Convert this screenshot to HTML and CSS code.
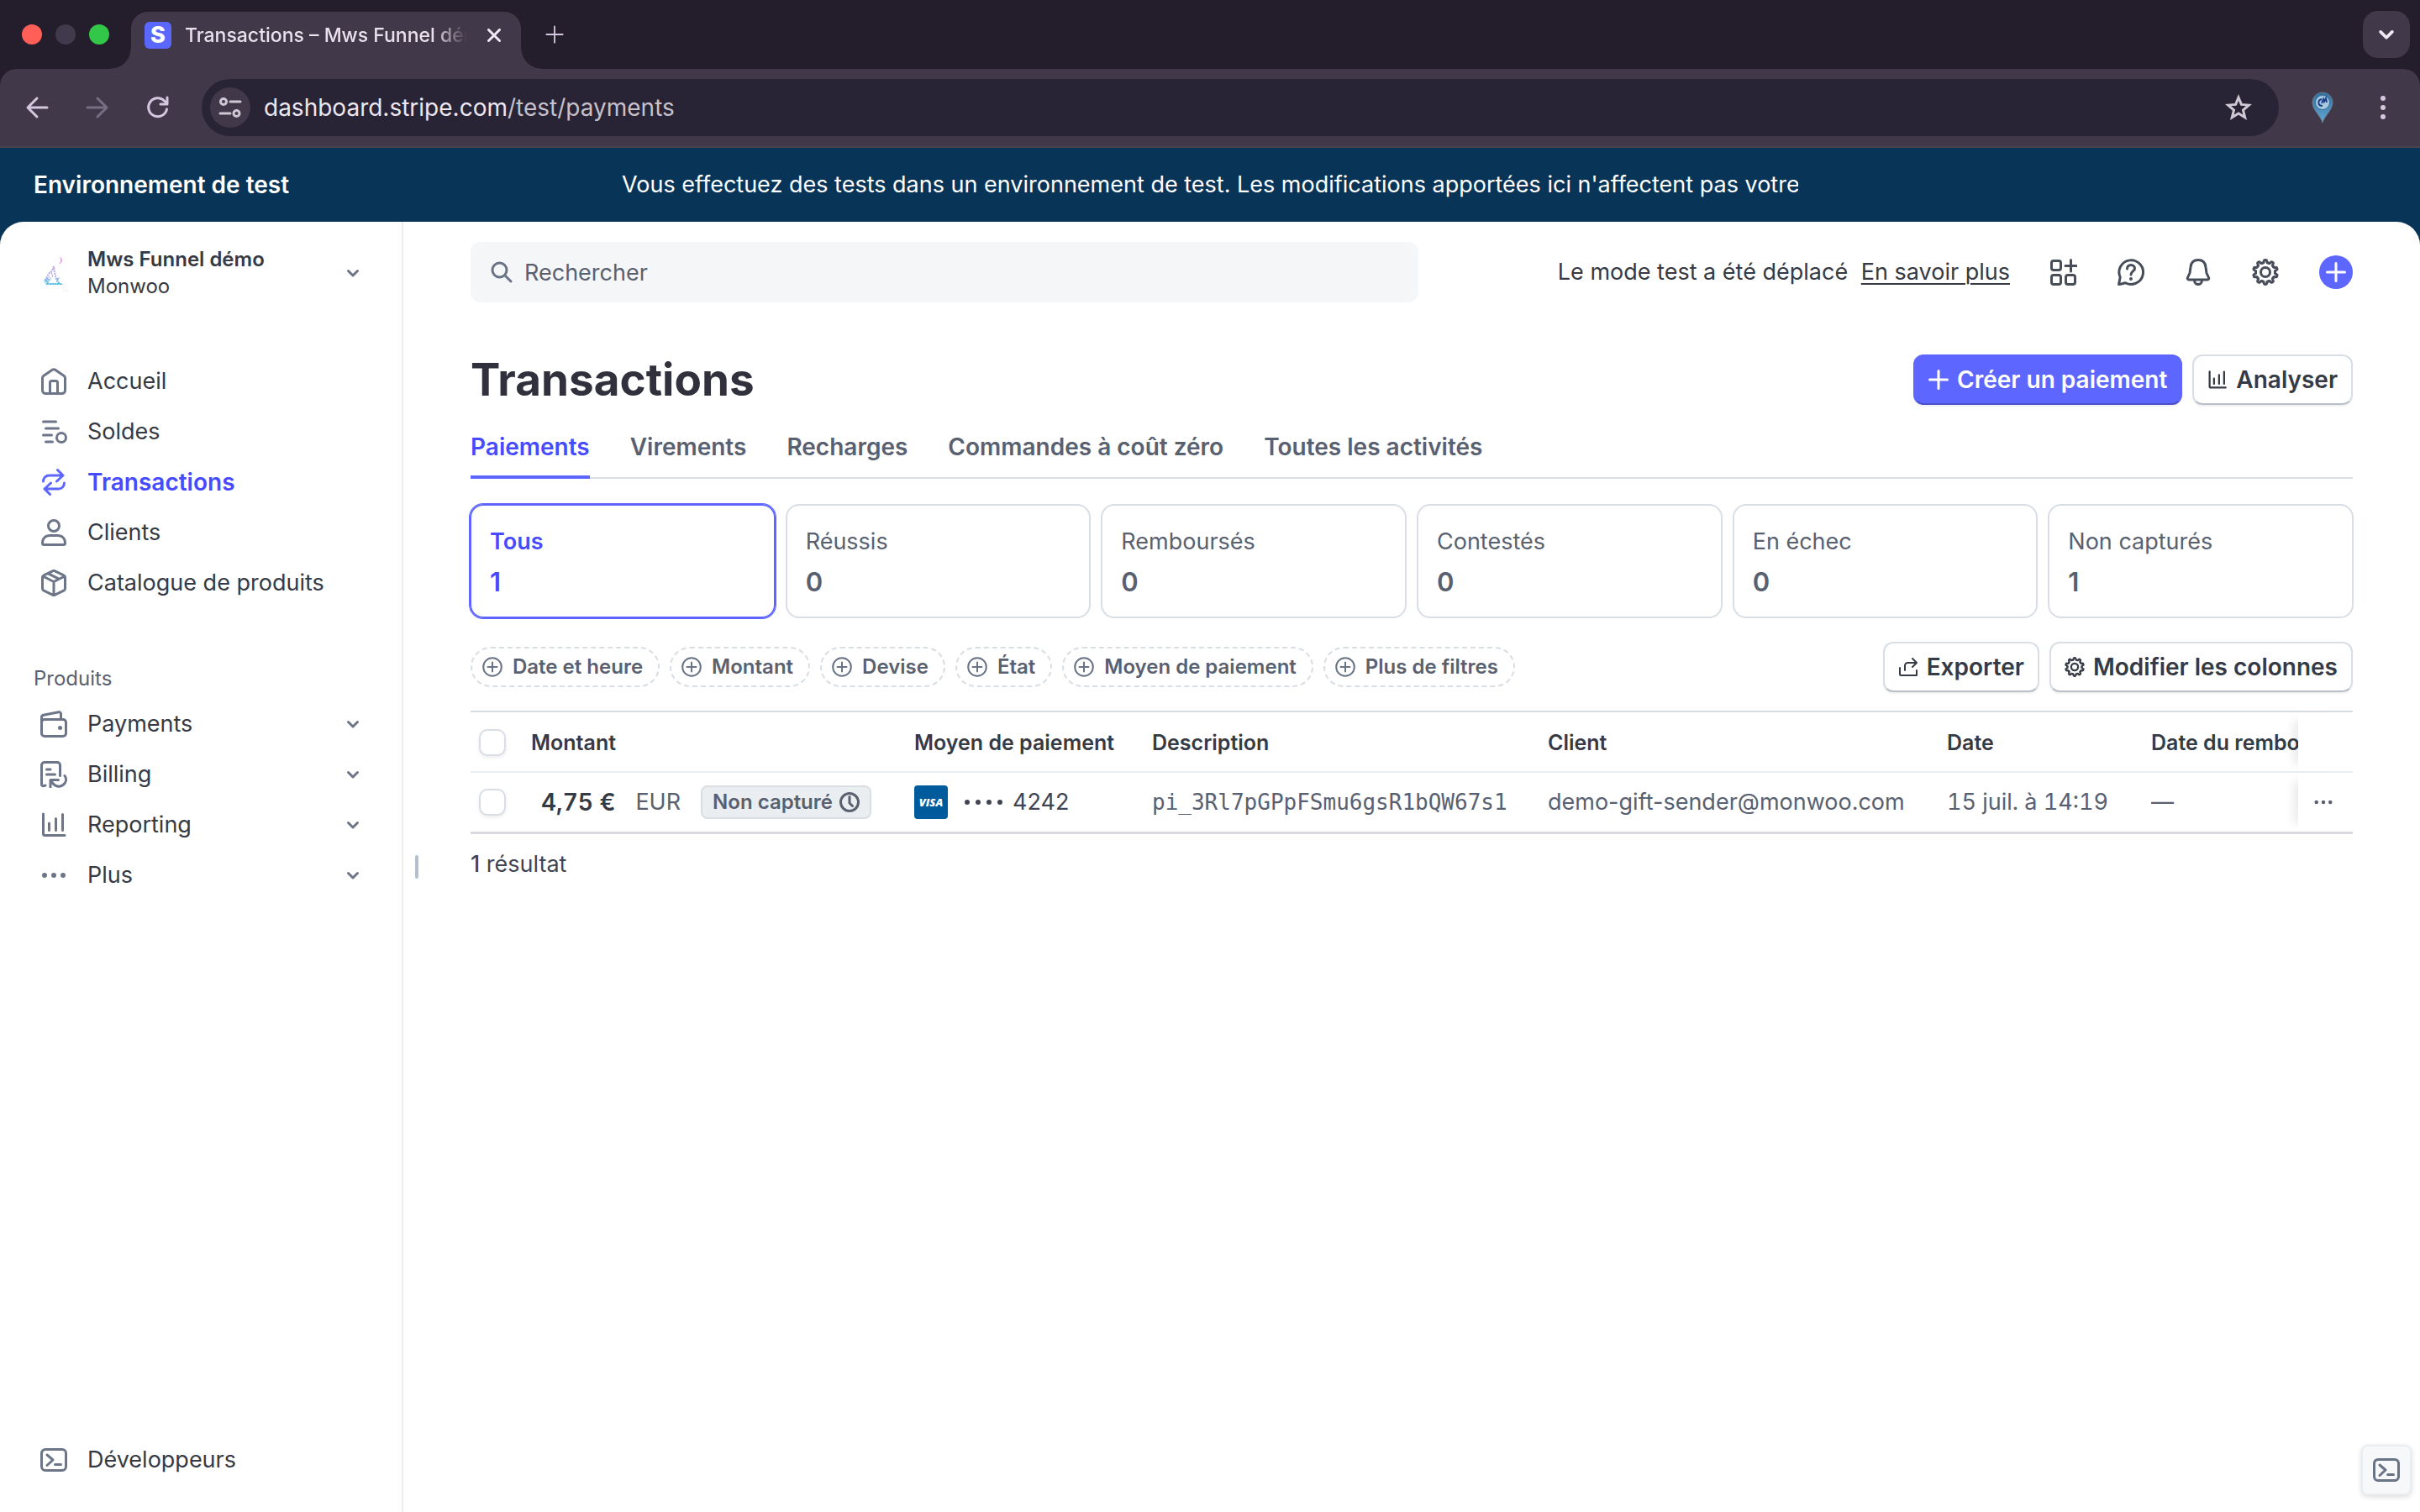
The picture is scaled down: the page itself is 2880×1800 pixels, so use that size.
FILE: index.html
```html
<!DOCTYPE html>
<html lang="fr">
<head>
  <meta charset="UTF-8" />
  <title>Transactions – Mws Funnel démo</title>
  <meta name="viewport" content="width=device-width, initial-scale=1.0" />
  <link rel="stylesheet" href="styles.css">
</head>
<body>

  <!-- Icon sprite -->
  <svg class="sprite" aria-hidden="true">
    <symbol id="i-chevron" viewBox="0 0 16 16"><path d="M2.500 5.500 8 11l5.500-5.500" /></symbol>
    <symbol id="i-close" viewBox="0 0 16 16"><path d="M1.500 1.500l13 13M14.500 1.500l-13 13" /></symbol>
    <symbol id="i-plus" viewBox="0 0 24 24"><path d="M12 1.500v21M1.500 12h21" /></symbol>
    <symbol id="i-back" viewBox="0 0 28 28"><path d="M26 14H3M14 3 3 14l11 11" /></symbol>
    <symbol id="i-forward" viewBox="0 0 28 28"><path d="M2 14h23M14 3l11 11-11 11" /></symbol>
    <symbol id="i-reload" viewBox="0 0 28 28"><path d="M24.500 16A11 11 0 1 1 21.500 6l3.500 3.500M25 2v8h-8" /></symbol>
    <symbol id="i-site" viewBox="0 0 28 28"><circle cx="6" cy="7" r="3.500" /><path d="M14 7h12M2 21h12" /><circle cx="21.500" cy="21" r="3.500" /></symbol>
    <symbol id="i-star" viewBox="0 0 32 32"><path stroke-linejoin="miter" d="M16 4l3.400 8.400 9 .7-6.900 5.900 2.200 8.800L16 23l-7.700 4.800 2.200-8.800-6.900-5.900 9-.7z" /></symbol>
    <symbol id="i-search" viewBox="0 0 26 26"><circle cx="10.500" cy="10.500" r="8.500" /><path d="M17 17l7 7" /></symbol>
    <symbol id="i-home" viewBox="0 0 32 32"><path d="M2.500 12c0-1.200.6-2 1.600-2.700L14.300 2.300a3 3 0 0 1 3.400 0l10.200 7c1 .7 1.600 1.500 1.600 2.700v14.500a4 4 0 0 1-4 4h-19a4 4 0 0 1-4-4zM11.500 30V17.500a2 2 0 0 1 2-2h5a2 2 0 0 1 2 2V30" /></symbol>
    <symbol id="i-balance" viewBox="0 0 32 32"><path d="M3.500 4h15M6.500 12h15M3.500 20h10M6.500 28h8" /><circle cx="25" cy="23" r="5.500" /></symbol>
    <symbol id="i-swap" viewBox="0 0 32 32"><path d="M3.500 15c0-4 3-7 7-7H26M20.500 1.500 27 8l-7.500 7M28.500 17c0 4-3 7-7 7H6M12.500 17 5 24l6.500 6.500" /></symbol>
    <symbol id="i-user" viewBox="0 0 32 32"><circle cx="16" cy="8" r="6.500" /><path d="M2.500 28.500c0-5.500 3.500-9 9-9h9c5.500 0 9 3.500 9 9 0 1.200-.8 2-2 2h-23c-1.200 0-2-.8-2-2z" /></symbol>
    <symbol id="i-box" viewBox="0 0 32 32"><path d="M14.500 1.800a3 3 0 0 1 3 0l10.300 5c1 .5 1.700 1.500 1.700 2.700v13c0 1.200-.7 2.200-1.700 2.700l-10.300 5a3 3 0 0 1-3 0l-10.300-5a3 3 0 0 1-1.700-2.700v-13c0-1.200.7-2.200 1.700-2.700zM3 8l13 6.500L29 8M16 14.500V30M9.500 4.800l13 6.500" /></symbol>
    <symbol id="i-wallet" viewBox="0 0 32 32"><rect x="1.500" y="10.500" width="29" height="20" rx="3.500" /><path d="M1.500 14V8c0-1.400.8-2.400 2.200-2.700l18-3.600c1.600-.3 2.800.6 2.800 2.200v6" /><circle class="dot" cx="23.500" cy="20.500" r="2.500" /></symbol>
    <symbol id="i-billing" viewBox="0 0 32 32"><path d="M6 29l-2.500.8c-1 .2-2-.6-2-1.600V5a3.500 3.500 0 0 1 3.500-3.500h15A3.500 3.500 0 0 1 23.500 5v12.500M7.500 10h4.500M7.500 16h10M12 31v-8.500h9.500M13 23.500c3 6.500 9.500 8.500 14 5 4-3 4.500-7.500 2-11" /></symbol>
    <symbol id="i-chart" viewBox="0 0 32 32"><path d="M3.500 3v23.500a2 2 0 0 0 2 2H29M10.500 14v8.500M18.500 8.500v14M26.500 3.500v19" /></symbol>
    <symbol id="i-dots" viewBox="0 0 32 32"><circle class="dot" cx="5" cy="16" r="3" /><circle class="dot" cx="16" cy="16" r="3" /><circle class="dot" cx="27" cy="16" r="3" /></symbol>
    <symbol id="i-terminal" viewBox="0 0 32 32"><rect x="1.500" y="3.500" width="29" height="25" rx="4.500" /><path d="M8 10l7 6-7 6.500M17.500 21.500h7" /></symbol>
    <symbol id="i-apps" viewBox="0 0 32 32"><rect x="1.500" y="2.500" width="11" height="11" rx="2.500" /><rect x="1.500" y="19.500" width="11" height="11" rx="2.500" /><rect x="18.500" y="19.500" width="11" height="11" rx="2.500" /><path d="M24.500 1.500v13.500M18 8.500h13" /></symbol>
    <symbol id="i-help" viewBox="0 0 32 32"><path d="M1.500 30.500l1.700-8.500A14.300 14.300 0 1 1 9.500 28.700c-2.500.3-4.500 1.800-8 1.800z" /><path d="M11.500 12c0-2.800 2-4.500 4.500-4.500s4.500 1.700 4.500 4c0 3.500-4.500 3.500-4.500 7.500" /><circle class="dot" cx="16" cy="24" r="2" /></symbol>
    <symbol id="i-bell" viewBox="0 0 32 32"><path d="M16 1.500c5.500 0 8.500 3.500 9 8.500l1 7 2.500 5.500c.6 1.400-.1 2.500-1.500 2.500H5c-1.400 0-2.100-1.100-1.500-2.500L6 17l1-7c.5-5 3.500-8.500 9-8.500zM11.500 25.500c0 3 2 5 4.500 5s4.500-2 4.500-5" /></symbol>
    <symbol id="i-gear" viewBox="0 0 32 32">
      <path id="tooth" d="M12.400 5.100l1.500-.4.400-2.100c.1-.7.500-1.100 1.200-1.100h1c.7 0 1.100.4 1.200 1.100l.4 2.100 1.500.4" />
      <use href="#tooth" transform="rotate(36 16 16)" /><use href="#tooth" transform="rotate(72 16 16)" />
      <use href="#tooth" transform="rotate(108 16 16)" /><use href="#tooth" transform="rotate(144 16 16)" />
      <use href="#tooth" transform="rotate(180 16 16)" /><use href="#tooth" transform="rotate(216 16 16)" />
      <use href="#tooth" transform="rotate(252 16 16)" /><use href="#tooth" transform="rotate(288 16 16)" />
      <use href="#tooth" transform="rotate(324 16 16)" />
      <circle cx="16" cy="16" r="5.500" />
    </symbol>
    <symbol id="i-add" viewBox="0 0 24 24"><circle cx="12" cy="12" r="10.800" /><path d="M12 6.500v11M6.500 12h11" /></symbol>
    <symbol id="i-clock" viewBox="0 0 24 24"><circle cx="12" cy="12" r="10.500" /><path d="M12 5.500V13l3.500 3.500" /></symbol>
    <symbol id="i-export" viewBox="0 0 24 24"><path d="M2 13v7.500a1.500 1.500 0 0 0 1.500 1.500H22v-6M8 16v-5.500A3.500 3.500 0 0 1 11.500 7H21M17 2l5 5-5 5" /></symbol>
  </svg>

  <!-- Browser chrome -->
  <div class="browser">
    <div class="tabstrip">
      <div class="lights"><span class="light red"></span><span class="light"></span><span class="light green"></span></div>
      <div class="tab">
        <span class="favicon">S</span>
        <span class="tab-title">Transactions – Mws Funnel démo</span>
        <button class="chrome-btn" aria-label="Fermer"><svg class="icon s16"><use href="#i-close" /></svg></button>
      </div>
      <button class="chrome-btn new-tab" aria-label="Nouvel onglet"><svg class="icon s22"><use href="#i-plus" /></svg></button>
      <button class="chrome-btn tab-search" aria-label="Rechercher un onglet"><svg class="icon s20"><use href="#i-chevron" /></svg></button>
    </div>
    <div class="toolbar">
      <button class="chrome-btn" aria-label="Retour"><svg class="icon s28"><use href="#i-back" /></svg></button>
      <button class="chrome-btn off" aria-label="Suivant"><svg class="icon s28"><use href="#i-forward" /></svg></button>
      <button class="chrome-btn" aria-label="Actualiser"><svg class="icon s28"><use href="#i-reload" /></svg></button>
      <div class="urlbar">
        <button class="chrome-btn site-info" aria-label="Infos du site"><svg class="icon s28"><use href="#i-site" /></svg></button>
        <span class="url">dashboard.stripe.com<span>/test/payments</span></span>
        <button class="chrome-btn" aria-label="Favori"><svg class="icon s32"><use href="#i-star" /></svg></button>
      </div>
      <button class="chrome-btn extension" aria-label="Extension">
        <svg class="s40" viewBox="0 0 40 40">
          <defs><linearGradient id="pin" x1="0" y1="0" x2="0" y2="1"><stop offset="0" stop-color="#2f6d9c" /><stop offset="1" stop-color="#63a9d6" /></linearGradient></defs>
          <path d="M20 38C18 30 8 23 8 14a12 12 0 0 1 24 0c0 9-10 16-12 24z" fill="url(#pin)" stroke="#6b7d8c" />
          <circle cx="20" cy="14" r="8.500" fill="#a9cbe2" stroke="#3a6f96" />
          <path d="M19 10c-5 1-5 8 1 8M19 15l2-5 1 3 2-4 1 5" fill="none" stroke="#1d3f8a" stroke-width="2" />
        </svg>
      </button>
      <button class="chrome-btn menu" aria-label="Menu"><span></span><span></span><span></span></button>
    </div>
  </div>

  <div class="app">
    <div class="banner">
      <strong>Environnement de test</strong>
      <p>Vous effectuez des tests dans un environnement de test. Les modifications apportées ici n'affectent pas votre compte en mode production.</p>
    </div>

    <div class="content">
      <aside class="sidebar">
        <button class="account">
          <svg class="account-logo" viewBox="0 0 32 44">
            <defs><linearGradient id="wolf" x1="0" y1="0" x2="0" y2="1"><stop offset="0" stop-color="#c79fe0" /><stop offset=".6" stop-color="#a9b2ea" /><stop offset="1" stop-color="#4fbfe3" /></linearGradient></defs>
            <path d="M19 3c4 1 5 7-2 9 3-2 4-5 2-9z" fill="#eba9e4" />
            <path d="M12 14l-2 5-4 4-4 7 2-1-1 3 4-3-3 6h16l-4-3 1-3-2 1-1-5-1-3z" fill="none" stroke="url(#wolf)" stroke-width="2" stroke-dasharray="2 1" />
            <path d="M3 35h17M9 21l2 6M6 26l3 4" stroke="url(#wolf)" stroke-width="1" fill="none" />
            <path d="M23 43h8" stroke="#cdeff0" stroke-width="1" stroke-dasharray="2 2" />
          </svg>
          <span class="account-name"><b>Mws Funnel démo</b><span>Monwoo</span></span>
          <svg class="icon s16 chevron"><use href="#i-chevron" /></svg>
        </button>

        <nav class="nav">
          <a href="#"><svg class="icon s32"><use href="#i-home" /></svg>Accueil</a>
          <a href="#"><svg class="icon s32"><use href="#i-balance" /></svg>Soldes</a>
          <a href="#" class="active"><svg class="icon s32"><use href="#i-swap" /></svg>Transactions</a>
          <a href="#"><svg class="icon s32"><use href="#i-user" /></svg>Clients</a>
          <a href="#"><svg class="icon s32"><use href="#i-box" /></svg>Catalogue de produits</a>
        </nav>

        <h2>Produits</h2>
        <nav class="nav">
          <a href="#"><svg class="icon s32"><use href="#i-wallet" /></svg>Payments<svg class="icon s16 chevron"><use href="#i-chevron" /></svg></a>
          <a href="#"><svg class="icon s32"><use href="#i-billing" /></svg>Billing<svg class="icon s16 chevron"><use href="#i-chevron" /></svg></a>
          <a href="#"><svg class="icon s32"><use href="#i-chart" /></svg>Reporting<svg class="icon s16 chevron"><use href="#i-chevron" /></svg></a>
          <a href="#"><svg class="icon s32"><use href="#i-dots" /></svg>Plus<svg class="icon s16 chevron"><use href="#i-chevron" /></svg></a>
        </nav>

        <nav class="nav nav-bottom">
          <a href="#"><svg class="icon s32"><use href="#i-terminal" /></svg>Développeurs</a>
        </nav>
        <span class="resize-handle"></span>
      </aside>

      <main class="main">
        <header class="topbar">
          <label class="search">
            <svg class="icon s26"><use href="#i-search" /></svg>
            <input type="text" placeholder="Rechercher" aria-label="Rechercher" />
          </label>
          <div class="topbar-right">
            <p>Le mode test a été déplacé <a href="#">En savoir plus</a></p>
            <button class="icon-btn" aria-label="Applications"><svg class="icon s32"><use href="#i-apps" /></svg></button>
            <button class="icon-btn" aria-label="Aide"><svg class="icon s32"><use href="#i-help" /></svg></button>
            <button class="icon-btn" aria-label="Notifications"><svg class="icon s32"><use href="#i-bell" /></svg></button>
            <button class="icon-btn" aria-label="Paramètres"><svg class="icon s32"><use href="#i-gear" /></svg></button>
            <button class="create-btn" aria-label="Créer"><svg class="icon s24"><use href="#i-plus" /></svg></button>
          </div>
        </header>

        <div class="title-row">
          <h1>Transactions</h1>
          <div class="actions">
            <button class="btn primary"><svg class="icon s24"><use href="#i-plus" /></svg>Créer un paiement</button>
            <button class="btn"><svg class="icon s24"><use href="#i-chart" /></svg>Analyser</button>
          </div>
        </div>

        <nav class="tabs">
          <a href="#" class="active">Paiements</a>
          <a href="#">Virements</a>
          <a href="#">Recharges</a>
          <a href="#">Commandes à coût zéro</a>
          <a href="#">Toutes les activités</a>
        </nav>

        <div class="cards">
          <button class="card active"><span>Tous</span><b>1</b></button>
          <button class="card"><span>Réussis</span><b>0</b></button>
          <button class="card"><span>Remboursés</span><b>0</b></button>
          <button class="card"><span>Contestés</span><b>0</b></button>
          <button class="card"><span>En échec</span><b>0</b></button>
          <button class="card"><span>Non capturés</span><b>1</b></button>
        </div>

        <div class="filter-row">
          <div class="chips">
            <button class="chip"><svg class="icon s24"><use href="#i-add" /></svg>Date et heure</button>
            <button class="chip"><svg class="icon s24"><use href="#i-add" /></svg>Montant</button>
            <button class="chip"><svg class="icon s24"><use href="#i-add" /></svg>Devise</button>
            <button class="chip"><svg class="icon s24"><use href="#i-add" /></svg>État</button>
            <button class="chip"><svg class="icon s24"><use href="#i-add" /></svg>Moyen de paiement</button>
            <button class="chip"><svg class="icon s24"><use href="#i-add" /></svg>Plus de filtres</button>
          </div>
          <div class="actions">
            <button class="btn"><svg class="icon s24 thin"><use href="#i-export" /></svg>Exporter</button>
            <button class="btn"><svg class="icon s24"><use href="#i-gear" /></svg>Modifier les colonnes</button>
          </div>
        </div>

        <table class="payments">
          <colgroup>
            <col class="c-check"><col class="c-amount"><col class="c-method"><col class="c-desc">
            <col class="c-client"><col class="c-date"><col><col class="c-more">
          </colgroup>
          <thead>
            <tr>
              <th><input type="checkbox" aria-label="Tout sélectionner" /></th>
              <th>Montant</th>
              <th>Moyen de paiement</th>
              <th>Description</th>
              <th>Client</th>
              <th>Date</th>
              <th>Date du remboursement</th>
              <th class="sticky"></th>
            </tr>
          </thead>
          <tbody>
            <tr>
              <td><input type="checkbox" aria-label="Sélectionner le paiement" /></td>
              <td><div class="amount"><b>4,75 €</b><span>EUR</span><span class="badge">Non capturé <svg class="icon s24"><use href="#i-clock" /></svg></span></div></td>
              <td><div class="method"><span class="visa">VISA</span><span class="mask"><i></i><i></i><i></i><i></i></span>4242</div></td>
              <td class="mono">pi_3Rl7pGPpFSmu6gsR1bQW67s1</td>
              <td>demo-gift-sender@monwoo.com</td>
              <td class="date">15 juil. à 14:19</td>
              <td>—</td>
              <td class="sticky"><button class="icon-btn" aria-label="Plus d'actions"><svg class="icon s24"><use href="#i-dots" /></svg></button></td>
            </tr>
          </tbody>
        </table>
        <p class="results"><b>1</b> résultat</p>
      </main>
    </div>
  </div>

  <button class="dev-btn" aria-label="Outils de développement"><svg class="icon s32"><use href="#i-terminal" /></svg></button>

</body>
</html>
```
FILE: styles.css
```css
* {
  box-sizing: border-box;
}

body {
  margin: 0;
  min-height: 100vh;
  display: flex;
  flex-direction: column;
  font-family: Inter, "Noto Sans", sans-serif;
  font-size: 27px;
  line-height: 36px;
  color: #353a44;
  background: #fff;
}

button {
  font: inherit;
  color: inherit;
  background: none;
  border: none;
  padding: 0;
}

a {
  color: inherit;
  text-decoration: none;
}

p, h1, h2 {
  margin: 0;
}

.sprite {
  position: absolute;
  width: 0;
  height: 0;
}

.icon {
  flex: none;
  fill: none;
  stroke: currentColor;
  stroke-width: 3;
  stroke-linecap: round;
  stroke-linejoin: round;
}

.icon.thin {
  stroke-width: 2;
}

.dot {
  fill: currentColor;
  stroke: none;
}

.s16 { width: 16px; height: 16px; }
.s20 { width: 20px; height: 20px; }
.s22 { width: 22px; height: 22px; }
.s24 { width: 24px; height: 24px; }
.s26 { width: 26px; height: 26px; }
.s28 { width: 28px; height: 28px; }
.s32 { width: 32px; height: 32px; }
.s40 { width: 40px; height: 40px; }

/* Browser */
.browser {
  background: #241d2c;
}

.tabstrip {
  height: 82px;
  display: flex;
  align-items: center;
  padding: 0 12px 0 26px;
}

.lights {
  display: flex;
  gap: 16px;
  width: 130px;
}

.light {
  width: 24px;
  height: 24px;
  border-radius: 50%;
  background: #403a4c;
}

.red { background: #ff5f57; }
.green { background: #32c748; }

.chrome-btn {
  display: flex;
  align-items: center;
  justify-content: center;
  color: #d3c8e0;
}

.tab {
  position: relative;
  align-self: flex-end;
  width: 464px;
  height: 68px;
  display: flex;
  align-items: center;
  padding: 0 24px 12px 16px;
  background: #413849;
  border-radius: 20px 20px 0 0;
}

/* outward curves at the foot of the tab */
.tab::before, .tab::after {
  content: "";
  position: absolute;
  bottom: 0;
  width: 24px;
  height: 24px;
}

.tab::before {
  right: 100%;
  background: radial-gradient(circle at 0 0, transparent 23px, #413849 24px);
}

.tab::after {
  left: 100%;
  background: radial-gradient(circle at 100% 0, transparent 23px, #413849 24px);
}

.tab .chrome-btn {
  color: #efe9f3;
}

.favicon {
  flex: none;
  width: 32px;
  height: 32px;
  border-radius: 6px;
  background: #5a68ff;
  color: #fff;
  font-size: 27px;
  font-weight: 800;
  line-height: 32px;
  text-align: center;
}

.tab-title {
  flex: 1;
  overflow: hidden;
  white-space: nowrap;
  margin: 0 24px 0 16px;
  font-size: 23px;
  font-weight: 500;
  color: #e9e1ec;
  mask-image: linear-gradient(to right, #000 88%, transparent);
}

.new-tab {
  margin-left: 29px;
}

.new-tab .icon {
  stroke-width: 2;
}

.tab-search {
  width: 56px;
  height: 56px;
  margin-left: auto;
  border-radius: 18px;
  background: #413849;
  color: #efe9f3;
}

.toolbar {
  height: 94px;
  display: flex;
  align-items: center;
  gap: 44px;
  padding: 0 36px 0 30px;
  background: #413849;
  border-bottom: 2px solid #4b444f;
  border-radius: 20px 20px 0 0;
}

.off {
  color: #786e83;
}

.urlbar {
  flex: 1;
  height: 68px;
  display: flex;
  align-items: center;
  margin-left: -6px;
  padding: 0 32px 0 10px;
  border-radius: 34px;
  background: #282335;
}

.urlbar .chrome-btn {
  color: #cfc8d4;
}

.site-info {
  width: 48px;
  height: 48px;
  border-radius: 50%;
  background: #413849;
}

.url {
  flex: 1;
  margin-left: 16px;
  font-size: 28px;
  color: #ece6f0;
}

.url span {
  color: #c6c0ca;
}

.extension {
  margin-left: -12px;
}

.menu {
  flex-direction: column;
  gap: 5px;
  width: 16px;
}

.menu span {
  width: 6px;
  height: 6px;
  border-radius: 50%;
  background: currentColor;
}

/* Test banner */
.app {
  flex: 1;
  display: flex;
  flex-direction: column;
  background: #083557;
}

.banner {
  height: 88px;
  display: grid;
  grid-template-columns: 1fr minmax(0, 1400px) 1fr;
  align-items: center;
  padding: 0 40px;
  color: #fff;
}

.banner strong {
  font-size: 28px;
  font-weight: 600;
}

.banner p {
  overflow: hidden;
  white-space: nowrap;
}

.content {
  flex: 1;
  display: flex;
  background: #fff;
  border-radius: 28px 28px 0 0;
}

/* Sidebar */
.sidebar {
  position: relative;
  flex: none;
  width: 480px;
  display: flex;
  flex-direction: column;
  padding: 28px 0 32px;
  border-right: 2px solid #ebeef1;
}

.account {
  display: flex;
  align-items: center;
  height: 66px;
  padding: 0 50px 0 52px;
  text-align: left;
}

.account-logo {
  width: 32px;
  height: 44px;
}

.account-name {
  flex: 1;
  display: flex;
  flex-direction: column;
  margin-left: 20px;
  font-size: 24px;
  line-height: 32px;
}

.account-name b {
  font-weight: 600;
}

.chevron {
  color: #6c7688;
}

.nav {
  display: flex;
  flex-direction: column;
  margin-top: 66px;
}

.nav a {
  height: 60px;
  display: flex;
  align-items: center;
  gap: 24px;
  padding: 0 50px 0 48px;
}

.nav .s32 {
  color: #6c7688;
}

.nav .chevron {
  margin-left: auto;
}

.nav .active {
  color: #474bff;
  font-size: 28px;
  font-weight: 600;
}

.nav .active .icon {
  color: #5d67ff;
}

.sidebar h2 {
  margin: 66px 0 0 40px;
  font-size: 24px;
  font-weight: 400;
  color: #596171;
}

.sidebar h2 + .nav {
  margin-top: 6px;
}

.sidebar .nav-bottom {
  margin-top: auto;
}

.resize-handle {
  position: absolute;
  top: 754px;
  left: 494px;
  width: 4px;
  height: 28px;
  border-radius: 2px;
  background: #b6c0cd;
}

/* Main */
.main {
  flex: 1;
  min-width: 0;
  padding: 24px 80px 0;
}

.topbar {
  display: flex;
  align-items: center;
  justify-content: space-between;
}

.search {
  flex: 0 1 1128px;
  height: 72px;
  display: flex;
  align-items: center;
  gap: 14px;
  padding: 0 24px;
  border-radius: 12px;
  background: #f5f6f8;
  color: #687385;
}

.search input {
  flex: 1;
  border: none;
  padding: 2px 0 0;
  background: none;
  font: inherit;
  color: #353a44;
  outline: none;
}

.search input::placeholder {
  color: #596171;
  opacity: 1;
}

.topbar-right {
  display: flex;
  align-items: center;
  gap: 48px;
}

.topbar-right a {
  margin-left: 8px;
  text-decoration: underline;
  text-decoration-thickness: 2px;
  text-underline-offset: 4px;
}

.icon-btn {
  display: flex;
  color: #474e5a;
}

.create-btn {
  display: flex;
  align-items: center;
  justify-content: center;
  width: 40px;
  height: 40px;
  border-radius: 50%;
  background: #5d67ff;
  color: #fff;
}

.title-row {
  display: flex;
  align-items: center;
  justify-content: space-between;
  margin-top: 62px;
}

h1 {
  font-size: 53px;
  line-height: 60px;
  font-weight: 700;
  color: #30313d;
}

.actions {
  display: flex;
  gap: 12px;
}

.btn {
  height: 60px;
  display: flex;
  align-items: center;
  gap: 10px;
  padding: 0 16px;
  border: 2px solid #d8dee4;
  border-bottom-color: #b9bfc6;
  border-radius: 12px;
  box-shadow: 0 2px 2px rgba(0, 0, 0, 0.06);
  font-size: 28px;
  font-weight: 600;
  background: #fff;
}

.primary {
  background: #5d67ff;
  border-color: #5d67ff;
  border-bottom-color: #4a50c9;
  color: #fff;
}

.tabs {
  display: flex;
  gap: 48px;
  margin-top: 32px;
  box-shadow: inset 0 -2px #d8dee4;
  color: #596171;
  font-size: 28px;
  font-weight: 600;
}

.tabs a {
  padding-bottom: 16px;
  border-bottom: 4px solid transparent;
}

.tabs .active {
  color: #474bff;
  border-color: #5d67ff;
}

.cards {
  display: grid;
  grid-template-columns: repeat(6, 1fr);
  gap: 12px;
  margin: 30px -1px 0;
}

.card {
  height: 136px;
  padding: 2px 22px 0;
  border: 2px solid #d8dee4;
  border-radius: 16px;
  text-align: left;
  color: #596171;
}

.card span, .card b {
  display: block;
}

.card b {
  margin-top: 12px;
  font-size: 31px;
  font-weight: 600;
}

.card.active {
  border-color: #5d67ff;
  box-shadow: 0 0 0 1px #5d67ff;
  color: #474bff;
}

.card.active span {
  font-weight: 600;
}

.filter-row {
  display: flex;
  align-items: center;
  justify-content: space-between;
  margin-top: 28px;
}

.chips {
  display: flex;
  gap: 12px;
}

.chip {
  height: 48px;
  display: flex;
  align-items: center;
  gap: 12px;
  padding: 0 18px 0 12px;
  border: 2px dashed #d8dee4;
  border-radius: 24px;
  font-size: 24px;
  font-weight: 600;
  color: #596171;
}

.chip .icon {
  stroke-width: 2;
  color: #687385;
}

/* Table */
.payments {
  width: 100%;
  margin-top: 22px;
  table-layout: fixed;
  border-spacing: 0;
  border-top: 2px solid #d5dbe1;
  border-bottom: 3px solid #d8dae0;
}

.c-check { width: 72px; }
.c-amount { width: 456px; }
.c-method { width: 283px; }
.c-desc { width: 471px; }
.c-client { width: 475px; }
.c-date { width: 243px; }
.c-more { width: 65px; }

.payments th, .payments td {
  height: 72px;
  padding: 0;
  text-align: left;
  white-space: nowrap;
  overflow: hidden;
  color: #596171;
}

.payments td {
  height: 70px;
}

.payments th {
  padding-top: 2px;
  border-bottom: 2px solid #ebeef1;
  font-size: 25px;
  font-weight: 600;
  color: #353a44;
}

.payments .sticky {
  position: relative;
  overflow: visible;
  padding-left: 18px;
  background: #fff;
  box-shadow: -14px 0 12px -10px rgba(0, 0, 0, 0.1);
}

.sticky .icon-btn {
  color: #596171;
}

input[type="checkbox"] {
  appearance: none;
  display: block;
  width: 32px;
  height: 32px;
  margin: 0 0 0 10px;
  border: 2px solid #d8dee4;
  border-radius: 10px;
  box-shadow: 0 2px 4px rgba(0, 0, 0, 0.08);
  background: #fff;
}

.amount {
  display: flex;
  align-items: center;
  gap: 24px;
  padding-left: 12px;
}

.amount b {
  font-size: 28px;
  font-weight: 600;
  font-variant-numeric: tabular-nums;
  color: #353a44;
}

.date {
  font-variant-numeric: tabular-nums;
}

.badge {
  height: 40px;
  display: flex;
  align-items: center;
  gap: 8px;
  padding: 0 12px;
  border: 2px solid #d8dee4;
  border-radius: 8px;
  background: #ebeef1;
  font-size: 24px;
  font-weight: 600;
}

.method {
  display: flex;
  align-items: center;
  color: #414552;
}

.visa {
  width: 40px;
  height: 40px;
  border-radius: 4px;
  background: #005b9d;
  color: #fff;
  font-family: "Open Sans", sans-serif;
  font-size: 13px;
  font-weight: 800;
  font-style: italic;
  line-height: 40px;
  text-align: center;
}

.mask {
  display: flex;
  gap: 7px;
  margin: 0 12px 0 20px;
}

.mask i {
  width: 6px;
  height: 6px;
  border-radius: 50%;
  background: #414552;
}

.payments .mono {
  font-family: "DejaVu Sans Mono", monospace;
  font-size: 26px;
}

.results {
  margin-top: 18px;
  color: #414552;
}

.results b {
  font-weight: 500;
}

.dev-btn {
  position: fixed;
  right: 10px;
  bottom: 20px;
  width: 60px;
  height: 60px;
  display: flex;
  align-items: center;
  justify-content: center;
  border: 2px solid #ebeef1;
  border-radius: 8px;
  background: #f6f8fa;
  color: #687385;
  box-shadow: 0 2px 6px rgba(0, 0, 0, 0.14);
}
```
